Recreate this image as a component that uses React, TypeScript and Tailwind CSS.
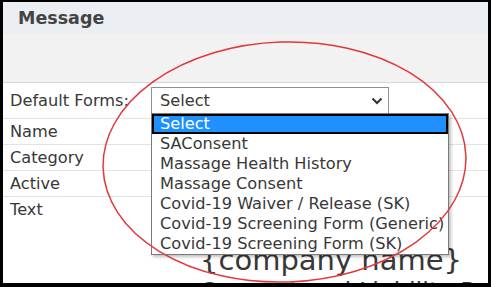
const forms = [
  "Select",
  "SAConsent",
  "Massage Health History",
  "Massage Consent",
  "Covid-19 Waiver / Release (SK)",
  "Covid-19 Screening Form (Generic)",
  "Covid-19 Screening Form (SK)",
];

function Row({ label }: { label: string }) {
  return (
    <div className="flex h-[26px] items-center border-b border-[#e3e3e3]">
      <div className="w-[148px] shrink-0 pl-[7px] leading-[20px]">{label}</div>
    </div>
  );
}

export default function App() {
  return (
    <div className="relative h-[287px] w-[491px] overflow-hidden border-t-2 border-l-[3px] border-r-[3px] border-b-4 border-black bg-white font-['DejaVu_Sans',sans-serif] text-[16.2px] text-[#383838]">
      <div className="flex h-[32px] items-center bg-[#ebeef3] pl-[15px] text-[17.5px] font-bold text-[#444]">
        Message
      </div>
      <div className="h-[49px] border-b border-[#d6d6d6] bg-[#f3f2f3]" />

      <div className="flex h-[36px] items-center border-b border-[#e3e3e3]">
        <div className="w-[148px] shrink-0 pl-[7px] leading-[20px]">Default Forms:</div>
        <div className="flex h-[27px] w-[238px] shrink-0 items-center justify-between border border-[#8f8f8f] bg-white pl-[8px] pr-[5px] leading-[20px]">
          <span>Select</span>
          <svg width="12" height="8" viewBox="0 0 12 8" className="mt-[1px]">
            <path d="M1.5 1.5 L6 6 L10.5 1.5" fill="none" stroke="#333" strokeWidth="2" />
          </svg>
        </div>
      </div>
      <Row label="Name" />
      <Row label="Category" />
      <Row label="Active" />

      <div className="flex">
        <div className="w-[148px] shrink-0 pl-[7px] pt-[3px] leading-[20px]">Text</div>
        <div className="shrink-0 whitespace-nowrap pl-[49px] pt-[46px]">
          <div className="text-[29px] leading-[34px]">{"{company name}"}</div>
          <div className="text-[24px] leading-[30px]">Consent and Liability Release</div>
        </div>
      </div>

      <div className="absolute left-[148px] top-[111px] w-[298px] border border-[#7a7a7a] bg-white shadow-[2px_2px_3px_rgba(0,0,0,0.25)]">
        {forms.map((f, i) => (
          <div
            key={f}
            className={
              i === 0
                ? "h-[20px] bg-[#1e90ff] pl-[8px] leading-[20px] text-white shadow-[inset_0_0_0_2px_#000]"
                : "h-[20px] pl-[8px] leading-[20px]"
            }
          >
            {f}
          </div>
        ))}
      </div>

      <svg
        width="491"
        height="287"
        className="pointer-events-none absolute -left-[3px] -top-[2px]"
      >
        <ellipse
          cx="284.5"
          cy="162"
          rx="181.5"
          ry="120"
          transform="rotate(-2 284.5 162)"
          fill="none"
          stroke="#e2383a"
          strokeWidth="1.5"
        />
      </svg>
    </div>
  );
}
